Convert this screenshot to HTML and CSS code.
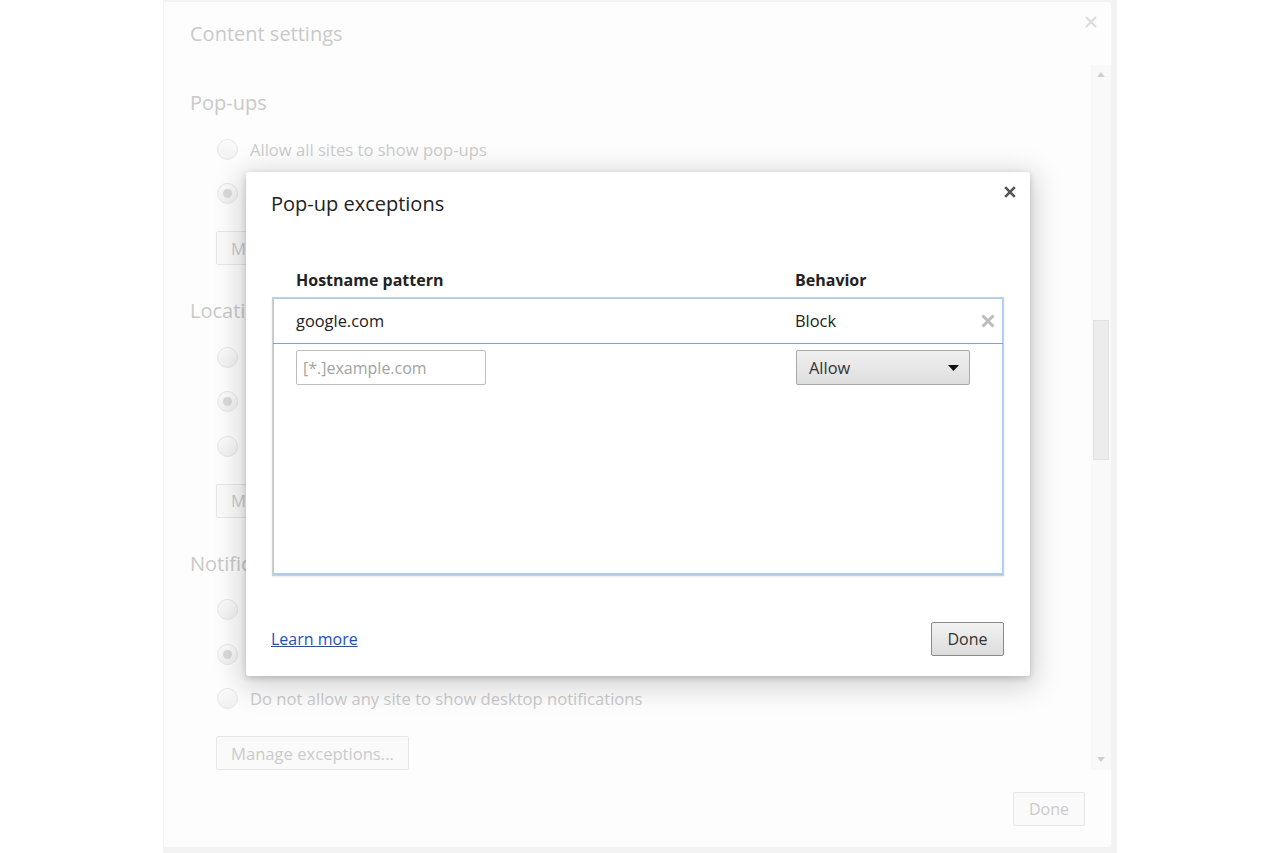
FILE: index.html
```html
<!DOCTYPE html>
<html>
<head>
<meta charset="utf-8">
<title>Content settings</title>
<link rel="stylesheet" href="styles.css">
</head>
<body>
<div class="frame">
  <div class="settings">
    <div class="s-head">
      <h1 class="s-title">Content settings</h1>
      <svg class="s-close" width="12" height="12" viewBox="0 0 12 12"><path d="M1 1L11 11M11 1L1 11" stroke="#dcdcdc" stroke-width="2.2" fill="none"/></svg>
    </div>
    <div class="s-body">
      <div class="s-scroll">
        <section class="sec">
          <h3 class="sec-title">Pop-ups</h3>
          <div class="radios">
            <div class="radio-row"><span class="radio"></span><span class="r-label">Allow all sites to show pop-ups</span></div>
            <div class="radio-row"><span class="radio checked"></span><span class="r-label">Do not allow any site to show pop-ups (recommended)</span></div>
          </div>
          <button class="btn faded">Manage exceptions...</button>
        </section>
        <section class="sec">
          <h3 class="sec-title">Location</h3>
          <div class="radios">
            <div class="radio-row"><span class="radio"></span><span class="r-label">Allow all sites to track your physical location</span></div>
            <div class="radio-row"><span class="radio checked"></span><span class="r-label">Ask when a site tries to track your physical location (recommended)</span></div>
            <div class="radio-row"><span class="radio"></span><span class="r-label">Do not allow any site to track your physical location</span></div>
          </div>
          <button class="btn faded">Manage exceptions...</button>
        </section>
        <section class="sec">
          <h3 class="sec-title">Notifications</h3>
          <div class="radios">
            <div class="radio-row"><span class="radio"></span><span class="r-label">Allow all sites to show desktop notifications</span></div>
            <div class="radio-row"><span class="radio checked"></span><span class="r-label">Ask when a site wants to show desktop notifications (recommended)</span></div>
            <div class="radio-row"><span class="radio"></span><span class="r-label">Do not allow any site to show desktop notifications</span></div>
          </div>
          <button class="btn faded">Manage exceptions...</button>
        </section>
      </div>
      <div class="scrollbar">
        <svg class="sb-arrow" width="8" height="5" viewBox="0 0 8 5"><path d="M0 5L4 0L8 5Z" fill="#cfcfcf"/></svg>
        <div class="sb-thumb"></div>
        <svg class="sb-arrow sb-down" width="8" height="5" viewBox="0 0 8 5"><path d="M0 0L8 0L4 5Z" fill="#cfcfcf"/></svg>
      </div>
    </div>
    <div class="s-foot">
      <button class="btn faded done">Done</button>
    </div>
  </div>

  <div class="modal">
    <h2 class="m-title">Pop-up exceptions</h2>
    <svg class="m-close" width="12" height="12" viewBox="0 0 12 12"><path d="M1.2 1.2L10.8 10.8M10.8 1.2L1.2 10.8" stroke="#555" stroke-width="2.6" fill="none"/></svg>
    <div class="m-table">
      <div class="m-heads">
        <span class="col1">Hostname pattern</span>
        <span class="col2">Behavior</span>
      </div>
      <div class="m-list">
        <div class="m-row first">
          <span class="col1">google.com</span>
          <span class="col2">Block</span>
          <svg class="rm" width="14" height="14" viewBox="0 0 14 14"><path d="M1.5 1.5L12.5 12.5M12.5 1.5L1.5 12.5" stroke="#bdbdbd" stroke-width="3" fill="none"/></svg>
        </div>
        <div class="m-row edit">
          <span class="col1"><input class="m-input" type="text" placeholder="[*.]example.com"></span>
          <span class="col2">
            <span class="m-select">Allow
              <svg class="caret" width="11" height="6" viewBox="0 0 11 6"><path d="M0 0L11 0L5.5 6Z" fill="#111"/></svg>
            </span>
          </span>
        </div>
      </div>
    </div>
    <div class="m-foot">
      <a class="m-link" href="#">Learn more</a>
      <button class="btn m-done">Done</button>
    </div>
  </div>
</div>
</body>
</html>
```

FILE: styles.css
```css
* { box-sizing: border-box; }

html, body {
  margin: 0;
  padding: 0;
  height: 853px;
  overflow: hidden;
  background: #ffffff;
  font-family: "Open Sans", "Noto Sans", "Liberation Sans", sans-serif;
}

.frame {
  position: relative;
  width: 954px;
  height: 853px;
  margin: 0 auto;
  padding: 2px 6px 6px 1px;
  background: #f3f3f3;
}

.settings {
  position: relative;
  height: 845px;
  background: #fdfdfd;
  border-radius: 3px;
  display: flex;
  flex-direction: column;
}

.s-head {
  position: relative;
  height: 63px;
  padding: 18px 26px 0 26px;
}

.s-title {
  margin: 0;
  font-size: 20px;
  line-height: 28px;
  font-weight: 400;
  color: #c9c9c9;
}

.s-close {
  position: absolute;
  top: 14px;
  right: 14px;
}

.s-body {
  display: flex;
  height: 705px;
}

.s-scroll {
  flex: 1;
  padding: 25px 0 0 26px;
  overflow: hidden;
}

.sec + .sec { margin-top: 33px; }

.sec-title {
  margin: 0;
  font-size: 20px;
  line-height: 26px;
  font-weight: 400;
  color: #c9c9c9;
}

.radios {
  margin-top: 11px;
  padding-left: 27px;
}

.radio-row {
  height: 44.5px;
  display: flex;
  align-items: center;
  gap: 12px;
}

.radio {
  width: 21px;
  height: 21px;
  border-radius: 50%;
  border: 1px solid #e6e6e6;
  background: linear-gradient(#fbfbfb, #f1f1f1);
  display: flex;
  align-items: center;
  justify-content: center;
  flex: none;
}

.radio.checked::after {
  content: "";
  width: 9px;
  height: 9px;
  border-radius: 50%;
  background: #d9d9d9;
}

.r-label {
  font-size: 16.6px;
  color: #cbcbcb;
  white-space: nowrap;
}

.btn {
  font-family: inherit;
  font-size: 16px;
  height: 34px;
  padding: 0 15px;
  border-radius: 2px;
}

.btn.faded {
  color: #cbcbcb;
  background: #fafafa;
  border: 1px solid #e7e7e7;
}

.sec .btn {
  margin: 15px 0 0 26px;
  font-size: 16.6px;
  padding: 0 14px;
}

.scrollbar {
  width: 20px;
  background: #f9f9f9;
  display: flex;
  flex-direction: column;
  align-items: center;
  padding-top: 7px;
}

.sb-thumb {
  width: 16px;
  height: 140px;
  margin-top: 243px;
  background: #ececec;
  border: 1px solid #e2e2e2;
}

.sb-down { margin-top: auto; margin-bottom: 8px; }

.s-foot {
  display: flex;
  justify-content: flex-end;
  padding: 22px 26px 0 0;
}

.done { width: 72px; padding: 0; }

/* Modal */
.modal {
  position: absolute;
  left: 83px;
  top: 172px;
  width: 784px;
  height: 504px;
  background: #ffffff;
  border-radius: 3px;
  box-shadow: 0 6px 28px 6px rgba(0, 0, 0, 0.16), 0 2px 6px rgba(0, 0, 0, 0.18);
  display: flex;
  flex-direction: column;
}

.m-title {
  margin: 0;
  padding: 18px 0 0 25px;
  font-size: 20px;
  line-height: 28px;
  font-weight: 400;
  color: #222;
}

.m-close {
  position: absolute;
  top: 14px;
  right: 14px;
}

.m-table {
  margin: 51px 0 0 26px;
  width: 732px;
}

.m-heads {
  display: flex;
  height: 22px;
  line-height: 22px;
  font-size: 16px;
  font-weight: 700;
  color: #222;
  padding-left: 24px;
  margin-bottom: 6px;
}

.col1 { width: 499px; flex: none; }
.col2 { flex: 1; }

.m-list {
  height: 279px;
  border: 1px solid #cfcfcf;
  box-shadow: inset 0 0 0 1px #a9cdf3, inset 0 -2px 0 #a9cdf3, 0 1px 2px rgba(0, 0, 0, 0.08);
}

.m-row {
  display: flex;
  align-items: center;
  padding-left: 23px;
  font-size: 16.4px;
  color: #222;
}

.m-row.first {
  height: 46px;
  border-bottom: 1px solid #8d9dc6;
}

.rm { margin-right: 8px; flex: none; }

.m-row.edit {
  padding-top: 6px;
  align-items: flex-start;
}

.m-input {
  width: 190px;
  height: 35px;
  border: 1px solid #bdbdbd;
  border-radius: 2px;
  padding: 0 6px;
  font-family: inherit;
  font-size: 16px;
  color: #222;
  outline: none;
}

.m-input::placeholder { color: #a3a3a3; }

.m-select {
  margin-left: 1px;
  width: 174px;
  height: 35px;
  border: 1px solid #a8a8a8;
  border-radius: 2px;
  background: linear-gradient(#f0f0f0, #dedede);
  display: flex;
  align-items: center;
  padding: 0 10px 0 12px;
  justify-content: space-between;
  color: #333;
  font-size: 16.4px;
}

.m-foot {
  margin-top: auto;
  display: flex;
  align-items: center;
  justify-content: space-between;
  padding: 0 26px 20px 25px;
}

.m-link {
  font-size: 16px;
  line-height: 20px;
  color: #1a4fcc;
  text-decoration: underline;
}

.m-done {
  width: 73px;
  padding: 0;
  color: #333;
  border: 1px solid #8a8a8a;
  background: linear-gradient(#f3f3f3, #dcdcdc);
}
```
